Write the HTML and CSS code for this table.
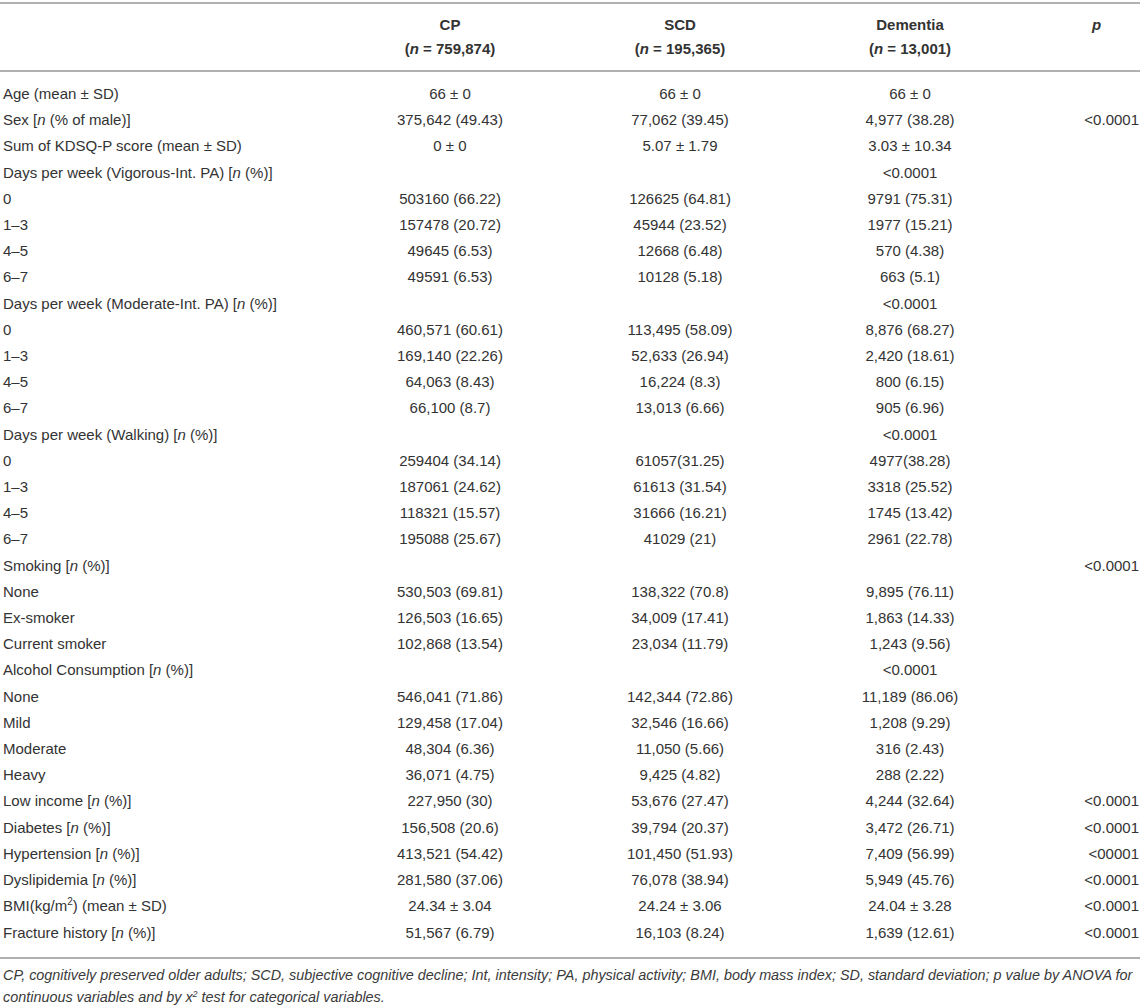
FILE: index.html
```html
<!DOCTYPE html>
<html lang="en">
<head>
    <meta charset="UTF-8">
    <title>Table 1 - Characteristics of participants</title>
    <link rel="stylesheet" href="styles.css">
</head>
<body>
    <div class="table-wrap">
        <table class="data-table">
            <colgroup>
                <col class="col-label">
                <col class="col-group">
                <col class="col-group">
                <col class="col-group">
                <col class="col-p">
            </colgroup>
            <thead>
                <tr class="head-top">
                    <th></th>
                    <th>CP</th>
                    <th>SCD</th>
                    <th>Dementia</th>
                    <th class="p-head"><i>p</i></th>
                </tr>
                <tr class="head-bottom">
                    <th></th>
                    <th>(<i>n</i> = 759,874)</th>
                    <th>(<i>n</i> = 195,365)</th>
                    <th>(<i>n</i> = 13,001)</th>
                    <th></th>
                </tr>
            </thead>
            <tbody>
                <tr class="first"><td>Age (mean ± SD)</td><td>66 ± 0</td><td>66 ± 0</td><td>66 ± 0</td><td></td></tr>
                <tr><td>Sex [<i>n</i> (% of male)]</td><td>375,642 (49.43)</td><td>77,062 (39.45)</td><td>4,977 (38.28)</td><td>&lt;0.0001</td></tr>
                <tr><td>Sum of KDSQ-P score (mean ± SD)</td><td>0 ± 0</td><td>5.07 ± 1.79</td><td>3.03 ± 10.34</td><td></td></tr>
                <tr><td>Days per week (Vigorous-Int. PA) [<i>n</i> (%)]</td><td></td><td></td><td>&lt;0.0001</td><td></td></tr>
                <tr><td>0</td><td>503160 (66.22)</td><td>126625 (64.81)</td><td>9791 (75.31)</td><td></td></tr>
                <tr><td>1–3</td><td>157478 (20.72)</td><td>45944 (23.52)</td><td>1977 (15.21)</td><td></td></tr>
                <tr><td>4–5</td><td>49645 (6.53)</td><td>12668 (6.48)</td><td>570 (4.38)</td><td></td></tr>
                <tr><td>6–7</td><td>49591 (6.53)</td><td>10128 (5.18)</td><td>663 (5.1)</td><td></td></tr>
                <tr><td>Days per week (Moderate-Int. PA) [<i>n</i> (%)]</td><td></td><td></td><td>&lt;0.0001</td><td></td></tr>
                <tr><td>0</td><td>460,571 (60.61)</td><td>113,495 (58.09)</td><td>8,876 (68.27)</td><td></td></tr>
                <tr><td>1–3</td><td>169,140 (22.26)</td><td>52,633 (26.94)</td><td>2,420 (18.61)</td><td></td></tr>
                <tr><td>4–5</td><td>64,063 (8.43)</td><td>16,224 (8.3)</td><td>800 (6.15)</td><td></td></tr>
                <tr><td>6–7</td><td>66,100 (8.7)</td><td>13,013 (6.66)</td><td>905 (6.96)</td><td></td></tr>
                <tr><td>Days per week (Walking) [<i>n</i> (%)]</td><td></td><td></td><td>&lt;0.0001</td><td></td></tr>
                <tr><td>0</td><td>259404 (34.14)</td><td>61057(31.25)</td><td>4977(38.28)</td><td></td></tr>
                <tr><td>1–3</td><td>187061 (24.62)</td><td>61613 (31.54)</td><td>3318 (25.52)</td><td></td></tr>
                <tr><td>4–5</td><td>118321 (15.57)</td><td>31666 (16.21)</td><td>1745 (13.42)</td><td></td></tr>
                <tr><td>6–7</td><td>195088 (25.67)</td><td>41029 (21)</td><td>2961 (22.78)</td><td></td></tr>
                <tr><td>Smoking [<i>n</i> (%)]</td><td></td><td></td><td></td><td>&lt;0.0001</td></tr>
                <tr><td>None</td><td>530,503 (69.81)</td><td>138,322 (70.8)</td><td>9,895 (76.11)</td><td></td></tr>
                <tr><td>Ex-smoker</td><td>126,503 (16.65)</td><td>34,009 (17.41)</td><td>1,863 (14.33)</td><td></td></tr>
                <tr><td>Current smoker</td><td>102,868 (13.54)</td><td>23,034 (11.79)</td><td>1,243 (9.56)</td><td></td></tr>
                <tr><td>Alcohol Consumption [<i>n</i> (%)]</td><td></td><td></td><td>&lt;0.0001</td><td></td></tr>
                <tr><td>None</td><td>546,041 (71.86)</td><td>142,344 (72.86)</td><td>11,189 (86.06)</td><td></td></tr>
                <tr><td>Mild</td><td>129,458 (17.04)</td><td>32,546 (16.66)</td><td>1,208 (9.29)</td><td></td></tr>
                <tr><td>Moderate</td><td>48,304 (6.36)</td><td>11,050 (5.66)</td><td>316 (2.43)</td><td></td></tr>
                <tr><td>Heavy</td><td>36,071 (4.75)</td><td>9,425 (4.82)</td><td>288 (2.22)</td><td></td></tr>
                <tr><td>Low income [<i>n</i> (%)]</td><td>227,950 (30)</td><td>53,676 (27.47)</td><td>4,244 (32.64)</td><td>&lt;0.0001</td></tr>
                <tr><td>Diabetes [<i>n</i> (%)]</td><td>156,508 (20.6)</td><td>39,794 (20.37)</td><td>3,472 (26.71)</td><td>&lt;0.0001</td></tr>
                <tr><td>Hypertension [<i>n</i> (%)]</td><td>413,521 (54.42)</td><td>101,450 (51.93)</td><td>7,409 (56.99)</td><td>&lt;00001</td></tr>
                <tr><td>Dyslipidemia [<i>n</i> (%)]</td><td>281,580 (37.06)</td><td>76,078 (38.94)</td><td>5,949 (45.76)</td><td>&lt;0.0001</td></tr>
                <tr><td>BMI(kg/m<sup>2</sup>) (mean ± SD)</td><td>24.34 ± 3.04</td><td>24.24 ± 3.06</td><td>24.04 ± 3.28</td><td>&lt;0.0001</td></tr>
                <tr class="last"><td>Fracture history [<i>n</i> (%)]</td><td>51,567 (6.79)</td><td>16,103 (8.24)</td><td>1,639 (12.61)</td><td>&lt;0.0001</td></tr>
            </tbody>
        </table>
        <p class="footnote">CP, cognitively preserved older adults; SCD, subjective cognitive decline; Int, intensity; PA, physical activity; BMI, body mass index; SD, standard deviation; p value by ANOVA for continuous variables and by <span class="x2">x<sup>2</sup></span> test for categorical variables.</p>
    </div>
</body>
</html>
```

FILE: styles.css
```css
body {
    margin: 0;
    padding: 0;
    background: #ffffff;
    color: #333333;
    font-family: 'Liberation Sans', Arial, sans-serif;
}
.table-wrap {
    width: 1140px;
    padding-top: 2px;
}
.data-table {
    width: 1140px;
    border-collapse: collapse;
    table-layout: fixed;
    font-size: 15px;
    border-top: 2px solid #b0b0b0;
    border-bottom: 2px solid #b0b0b0;
}
.col-label {
    width: 335px;
}
.col-group {
    width: 230px;
}
.col-p {
    width: 115px;
}
th {
    font-weight: bold;
    text-align: center;
    line-height: 24px;
    padding: 0;
}
.head-top th {
    padding-top: 9px;
}
.head-bottom th {
    padding-bottom: 9px;
    border-bottom: 2px solid #b0b0b0;
}
.p-head {
    padding-left: 28px;
}
td {
    text-align: center;
    line-height: 26.2px;
    padding: 0;
    white-space: nowrap;
}
td:first-child {
    text-align: left;
    padding-left: 3px;
}
td:last-child {
    text-align: right;
    padding-right: 1px;
}
.first td {
    padding-top: 9px;
}
.last td {
    padding-bottom: 11px;
}
sup {
    font-size: 10px;
    line-height: 0;
}
.footnote {
    margin: 0;
    padding: 5px 0 0 3px;
    font-size: 14.4px;
    font-style: italic;
    line-height: 22px;
    color: #3a3a3a;
}
.x2 sup {
    font-size: 9px;
    vertical-align: 5px;
}
```
